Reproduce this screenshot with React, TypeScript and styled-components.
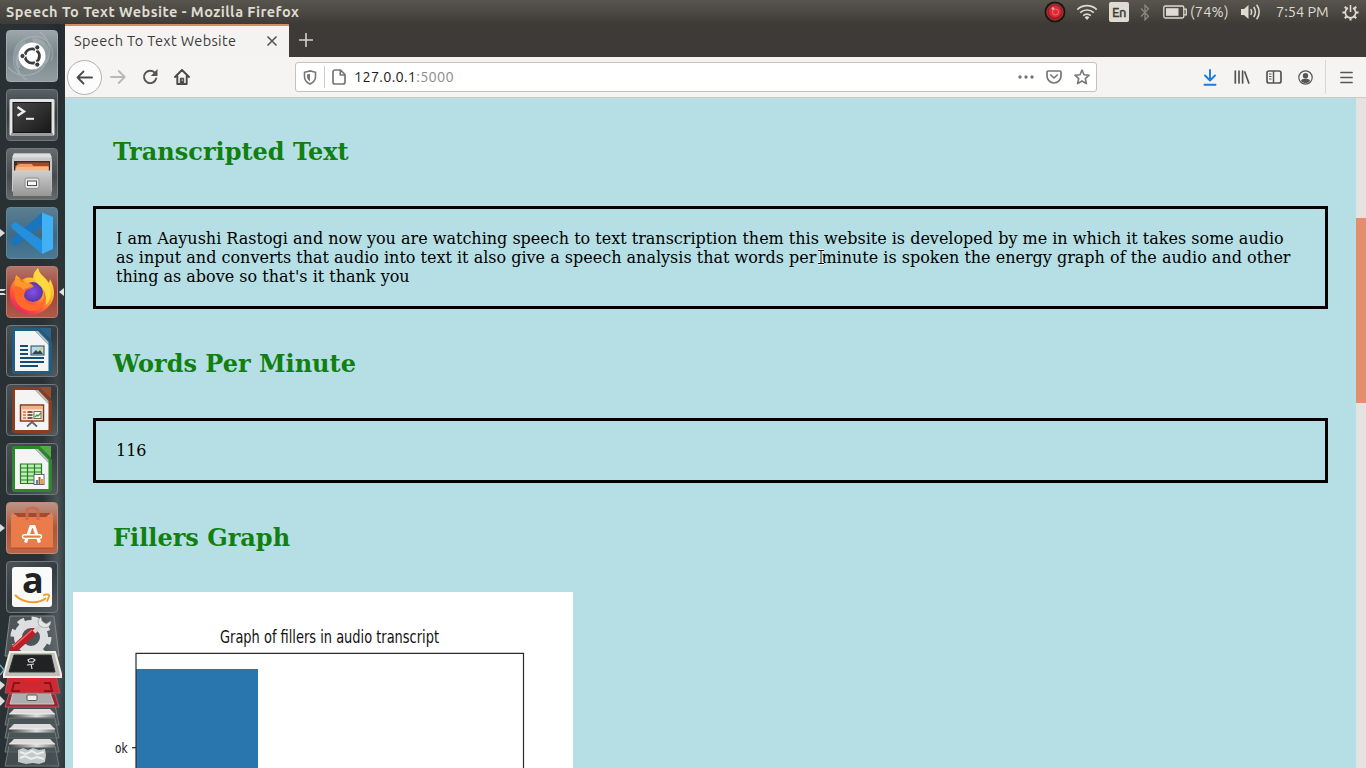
import React from "react";
import styled, { createGlobalStyle } from "styled-components";

const GlobalStyle = createGlobalStyle`
  * { box-sizing: border-box; }
  body { margin: 0; overflow: hidden; background: #b6dfe5; }
  svg { display: block; flex: none; }
`;

const uiFont = `Ubuntu, "Open Sans", "Noto Sans", sans-serif`;

const Desktop = styled.div`
  width: 1366px;
  height: 768px;
  display: flex;
  flex-direction: column;
  overflow: hidden;
  font-family: ${uiFont};
`;

const Panel = styled.header`
  height: 24px;
  flex: none;
  display: flex;
  align-items: center;
  justify-content: space-between;
  padding: 0 7px 0 6px;
  background: linear-gradient(#57554d, #4b4942 50%, #3e3b37);
  color: #dfdbd2;
`;

const WindowTitle = styled.span`
  font-size: 14.5px;
  line-height: 24px;
  font-weight: 700;
  white-space: nowrap;
  letter-spacing: 0.46px;
`;

const Indicators = styled.div`
  display: flex;
  align-items: center;
  height: 24px;
`;

const Indicator = styled.div<{ $gap?: number }>`
  display: flex;
  align-items: center;
  margin-left: ${(p) => p.$gap ?? 0}px;
`;

const PanelText = styled.span<{ $w: number; $spacing: number }>`
  width: ${(p) => p.$w}px;
  font-size: 14.5px;
  line-height: 24px;
  letter-spacing: ${(p) => p.$spacing}px;
  white-space: nowrap;
`;

const Keyboard = styled.span`
  width: 20px;
  height: 20px;
  border-radius: 2px;
  background: #dfdbd2;
  color: #3f3d38;
  font-size: 13px;
  line-height: 21px;
  font-weight: 500;
  text-align: center;
  letter-spacing: -0.5px;
  -webkit-text-stroke: 0.3px #3f3d38;
`;

const Workspace = styled.div`
  flex: 1;
  min-height: 0;
  display: flex;
`;

const Launcher = styled.aside`
  width: 65px;
  flex: none;
  display: flex;
  flex-direction: column;
  gap: 7px;
  padding-top: 6px;
  background:
    linear-gradient(90deg, #2a3135 0 66%, rgba(42, 49, 53, 0.2) 88%, rgba(42, 49, 53, 0.75) 100%),
    linear-gradient(#20292e 0, #2c3437 30%, #566164 70%, #566164 85%, #3e484c 100%);
`;

const LauncherItem = styled.div`
  display: flex;
  align-items: center;
  height: 52px;
  flex: none;
`;

const Marker = styled.span<{ $kind?: "one" | "two" }>`
  width: 6px;
  height: ${(p) => (p.$kind === "two" ? 6 : 8)}px;
  flex: none;
  border: 0 solid transparent;
  ${(p) => p.$kind === "one" && "border-width: 4px 0 4px 5px; border-left-color: #dcdcdc;"}
  ${(p) => p.$kind === "two" && "border-width: 2px 2px 2px 0; border-top-color: #dcdcdc; border-bottom-color: #dcdcdc;"}
`;

const ActiveMarker = styled.span`
  width: 0;
  margin-left: 1px;
  border: 4px solid transparent;
  border-right: 5px solid #e2e2e2;
  border-left: 0;
`;

const Tile = styled.div<{ $bg: string; $edge: string }>`
  width: 52px;
  height: 52px;
  flex: none;
  border-radius: 4px;
  border: 1px solid ${(p) => p.$edge};
  background: ${(p) => p.$bg};
  display: flex;
  align-items: center;
  justify-content: center;
`;

const Browser = styled.main`
  flex: 1;
  min-width: 0;
  display: flex;
  flex-direction: column;
`;

const TabStrip = styled.div`
  height: 33px;
  flex: none;
  display: flex;
  background: #3e3a37;
`;

const Tab = styled.div`
  width: 224px;
  height: 33px;
  display: flex;
  align-items: center;
  justify-content: space-between;
  padding: 0 11px 2px 9px;
  border-top: 2px solid #d58a6d;
  background: #f5f3f2;
  color: #3d3c3b;
  font-size: 14.5px;
  letter-spacing: 0.36px;
  white-space: nowrap;
`;

const NewTab = styled.div`
  width: 34px;
  height: 32px;
  display: flex;
  align-items: center;
  justify-content: center;
`;

const Toolbar = styled.div`
  height: 41px;
  flex: none;
  display: flex;
  align-items: center;
  padding: 0 13px 0 2px;
  background: #f5f4f3;
  border-bottom: 1px solid #cbc9c8;
`;

const BackButton = styled.div`
  width: 35px;
  height: 35px;
  flex: none;
  border: 1px solid #b3b1b0;
  border-radius: 50%;
  background: #fcfcfc;
  display: flex;
  align-items: center;
  justify-content: center;
`;

const Nav = styled.div`
  display: flex;
  align-items: center;
  gap: 16px;
  width: 193px;
  padding-left: 8px;
`;

const UrlBar = styled.div`
  width: 802px;
  height: 30px;
  flex: none;
  display: flex;
  align-items: center;
  padding: 0 6px 0 7px;
  border: 1px solid #c4c2c1;
  border-radius: 3px;
  background: #fff;
`;

const UrlDivider = styled.span`
  width: 1px;
  height: 22px;
  margin: 0 7px 0 7px;
  background: #cfcdcc;
`;

const Url = styled.span`
  flex: 1;
  padding-left: 8px;
  font-size: 14.5px;
  line-height: 28px;
  letter-spacing: 0.28px;
  color: #1c1b1b;
`;

const Port = styled.span`
  color: #8d8c8b;
`;

const UrlActions = styled.div`
  display: flex;
  align-items: center;
  gap: 12px;
`;

const Tools = styled.div`
  flex: 1;
  display: flex;
  align-items: center;
  justify-content: flex-end;
  gap: 16px;
`;

const ToolDivider = styled.span`
  width: 1px;
  height: 34px;
  margin: 0 -2px 0 -4px;
  background: #d8d6d5;
`;

const Viewport = styled.div`
  flex: 1;
  min-height: 0;
  display: flex;
`;

const Page = styled.div`
  flex: 1;
  min-width: 0;
  overflow: hidden;
  padding: 40px 8px 0;
  background: #b6dfe5;
  color: #000;
  font-family: "DejaVu Serif", serif;
`;

const Heading = styled.h2`
  margin: 0;
  padding-left: 40px;
  font-size: 24px;
  line-height: 28px;
  font-weight: 700;
  color: #108010;
`;

const ResultBox = styled.div`
  position: relative;
  margin: 40px 20px 41px;
  padding: 20px;
  border: 3px solid #000;
  font-size: 16px;
  line-height: 19px;
`;

const Line = styled.div`
  white-space: nowrap;
`;

const Caret = styled.svg`
  position: absolute;
  left: 721px;
  top: 40px;
`;

const Chart = styled.svg`
  margin-top: 40px;
  background: #fff;
`;

const ScrollTrack = styled.div`
  width: 10px;
  flex: none;
  padding-top: 120px;
  background: #e5e3e2;
`;

const ScrollThumb = styled.div`
  height: 185px;
  background: #e48e6d;
`;

const RecordIcon = () => (
  <svg width="22" height="22" viewBox="0 0 22 22">
    <circle cx="11" cy="11" r="10.5" fill="#1b1514" />
    <circle cx="11" cy="11" r="8.2" fill="#b01522" stroke="#7b5552" strokeWidth="0.8" />
    <circle cx="11" cy="10.5" r="6" fill="#d82a38" />
    <circle cx="11.5" cy="11" r="3" fill="none" stroke="#ee6d72" strokeWidth="1" />
    <circle cx="9" cy="7.5" r="1.3" fill="#f4a6a5" />
  </svg>
);

const WifiIcon = () => (
  <svg width="22" height="16" viewBox="0 0 22 16" fill="none" stroke="#dfdbd2" strokeWidth="1.7">
    <path d="M1.3 5.6C6.8.3 15.2.3 20.7 5.6M4.2 8.7c3.9-3.6 9.7-3.6 13.6 0M7.2 11.7c2.3-2 5.3-2 7.6 0" />
    <path d="M8.6 13.3a3.6 3.6 0 0 1 4.8 0L11 16z" fill="#dfdbd2" stroke="none" />
  </svg>
);

const BluetoothIcon = () => (
  <svg width="10" height="17" viewBox="0 0 10 17" fill="none" stroke="#8a877f" strokeWidth="1.3">
    <path d="M1 4.5l7.5 7.7L5 15.8V1.2l3.5 3.6L1 12.5" />
  </svg>
);

const BatteryIcon = () => (
  <svg width="24" height="14" viewBox="0 0 24 14">
    <rect x="0.8" y="1" width="20" height="12" rx="1.5" fill="none" stroke="#dfdbd2" strokeWidth="1.3" />
    <rect x="3" y="3.2" width="12.5" height="7.6" fill="#dfdbd2" />
    <path d="M21 4.2h2.3v5.6H21" fill="none" stroke="#dfdbd2" strokeWidth="1.3" />
  </svg>
);

const VolumeIcon = () => (
  <svg width="20" height="18" viewBox="0 0 20 18">
    <path d="M0 6h3l4.5-4v14L3 12H0z" fill="#dfdbd2" />
    <path d="M9.700 6.200q1.800 2.800 0 5.600M12.700 4q3.300 5 0 10M15.700 1.800q5 7.200 0 14.400" fill="none" stroke="#dfdbd2" strokeWidth="1.5" />
  </svg>
);

const SessionIcon = () => (
  <svg width="17" height="17" viewBox="0 0 17 17" fill="none" stroke="#dfdbd2">
    <path d="M6 4a5.200 5.200 0 1 0 5 0" strokeWidth="1.7" />
    <path d="M8.500 1v7" strokeWidth="1.6" />
    <path d="M.4 8.500h3M13.600 8.500h3M2.800 2.800l2 2M14.200 2.800l-2 2M2.800 14.200l2-2M14.200 14.200l-2-2M8.500 13.600v3" strokeWidth="2.1" />
  </svg>
);

const UbuntuIcon = () => (
  <svg width="50" height="50" viewBox="0 0 50 50">
    <g fill="none" stroke="#d0d7da" opacity=".3" strokeWidth="1.5">
      <path d="M13 44C2 31 5 13 20 7s31 7 24 23" />
      <path d="M20 49C8 42 7 26 15 17M33 1c11 8 17 29-5 38M1 36c8 11 27 12 37-2" />
    </g>
    <path d="M25 7c16 0 22 14 14 27L30 25zM12 38C3 28 8 14 18 10l2 12z" fill="#cbd3d6" opacity=".28" />
    <circle cx="25" cy="25" r="13.5" fill="#fff" />
    <circle cx="25.2" cy="25" r="7.2" fill="none" stroke="#393e40" strokeWidth="2.8" strokeDasharray="13.6 1.48" strokeDashoffset="6.8" />
    <g fill="#393e40" stroke="#fff" strokeWidth="1">
      <circle cx="15.500" cy="25" r="2.6" />
      <circle cx="30.300" cy="16.400" r="2.6" />
      <circle cx="30.300" cy="33.600" r="2.6" />
    </g>
  </svg>
);

const TerminalIcon = () => (
  <svg width="50" height="50" viewBox="0 0 50 50">
    <defs>
      <linearGradient id="term" x1="0" y1="0" x2="1" y2="1">
        <stop offset="0" stopColor="#484848" />
        <stop offset=".5" stopColor="#303030" />
        <stop offset="1" stopColor="#171717" />
      </linearGradient>
    </defs>
    <rect x="2.5" y="9" width="45" height="36.5" rx="1.5" fill="#e4e4e4" />
    <rect x="4" y="43" width="42" height="2" fill="#9c9c9c" />
    <rect x="6" y="12.500" width="38" height="30" fill="url(#term)" stroke="#151515" />
    <path d="M10.500 17l6.500 4.400-6.500 4.400" fill="none" stroke="#eee" strokeWidth="2.4" />
    <path d="M19 28.800h8" stroke="#eee" strokeWidth="2" />
  </svg>
);

const FilesIcon = () => (
  <svg width="50" height="50" viewBox="0 0 50 50">
    <defs>
      <linearGradient id="cab" x1="0" y1="0" x2="0" y2="1">
        <stop offset="0" stopColor="#cfcfcf" />
        <stop offset="1" stopColor="#969696" />
      </linearGradient>
    </defs>
    <path d="M7 4.500h36l2 6v32H5v-32z" fill="#c9c9c9" />
    <path d="M7 4.500h36l2 4H5z" fill="#dedede" />
    <path d="M7 12h36v10H7z" fill="#35302e" />
    <path d="M10 13.500h32v9H10z" fill="#a84823" />
    <path d="M8.500 17l4-2h12l2 2h15v7h-33z" fill="#ed9865" />
    <path d="M8.500 19.500l2-1.500h31v5h-33z" fill="#f3b98a" />
    <path d="M6 21.500h38.500V47H6z" fill="url(#cab)" />
    <rect x="18" y="29" width="14" height="10.500" rx="2" fill="#e5e5e5" stroke="#8a8a8a" />
    <rect x="20.500" y="32" width="9" height="4.500" fill="#f7f7f7" stroke="#4e4e4e" />
  </svg>
);

const CodeIcon = () => (
  <svg width="50" height="50" viewBox="0 0 50 50">
    <path d="M35 4.500L4.500 31.500v4l4 2.500L36 17z" fill="#1976bd" />
    <path d="M8.500 14L4.500 16.500v3.500L35 46l1-13z" fill="#2490dd" />
    <path d="M35 4.500L46 9v32l-11 5z" fill="#42b0f5" />
  </svg>
);

const FirefoxIcon = () => (
  <svg width="50" height="50" viewBox="0 0 50 50">
    <defs>
      <linearGradient id="fox" x1=".85" y1="0" x2=".2" y2="1">
        <stop offset="0" stopColor="#fff24b" />
        <stop offset=".4" stopColor="#ffb32d" />
        <stop offset=".7" stopColor="#ff5939" />
        <stop offset="1" stopColor="#e91a69" />
      </linearGradient>
      <radialGradient id="globe">
        <stop offset="0" stopColor="#874ee7" />
        <stop offset="1" stopColor="#5537a9" />
      </radialGradient>
    </defs>
    <path d="M31 1c1 7 7 8 11 15l1-4c6 11 5 21-1 27-10 12-28 11-36-1C0 28 3 18 8 13l1-5 6 5c4-3 7-3 11-2l1-5z" fill="url(#fox)" />
    <circle cx="26" cy="25" r="10" fill="url(#globe)" />
    <path d="M8 13c6-3 9 1 10 3 3 1 7 1 9 3-2 3-7 2-9 6-3 7 2 14 11 13 8-1 10-9 6-16 9 8 1 22-10 22C12 43 5 32 8 21z" fill="#ff6a2b" />
    <path d="M31 1c1 8 9 10 12 20 2 8-1 14-4 17 1-8-1-16-7-20-6-5-6-11-1-17z" fill="#ffd83f" />
    <path d="M8 10l8 5c4 0 8 1 10 4-3 2-7 1-9 4-3-3-6-4-9-4z" fill="#ff982b" />
  </svg>
);

const DocumentIcon = ({ colour, fold, children }: { colour: string; fold: string; children: React.ReactNode }) => (
  <svg width="50" height="50" viewBox="0 0 50 50">
    <path d="M7 2h25l13 14v29c0 2-1 3-3 3H8c-2 0-3-1-3-3V4c0-1 1-2 2-2z" fill={colour} />
    <path d="M32 2h12v12z" fill={fold} />
    <path d="M8 5h20l13.500 14v26H8z" fill="#f4f4f5" />
    <path d="M28 5l13.500 14v-3L31 5z" fill="#b9c0c3" />
    {children}
  </svg>
);

const WriterArt = () => (
  <>
    <path d="M13 20h8M13 24h8M13 28h8M13 32h24M13 36h24M13 40h18" stroke="#174d70" strokeWidth="2" />
    <rect x="24" y="20" width="13" height="9" fill="#b9dbe5" stroke="#184c68" />
    <path d="M25 28l4-4 2 2 2-2 3 4z" fill="#36434a" />
    <circle cx="34" cy="23" r="1.3" fill="#f5ca3d" />
  </>
);

const ImpressArt = () => (
  <>
    <path d="M25 35v3M20 41.500l5-4.500 5 4.500" fill="none" stroke="#666" strokeWidth="1.7" />
    <rect x="13.500" y="20" width="23" height="16" fill="#ffe7d5" stroke="#8c3818" strokeWidth="1.5" />
    <path d="M14.500 21h21v3.500h-21z" fill="#f0b28e" />
    <path d="M16 27h3M16 30h3M16 33h3" stroke="#dc6d3d" strokeWidth="1.6" />
    <path d="M20.500 27h5M20.500 30h5M20.500 33h5" stroke="#5c2b1d" strokeWidth="1.6" />
    <rect x="27" y="26.500" width="7" height="7" fill="#fff" stroke="#54754e" />
    <path d="M28 32l2-2 1 1 3-3" fill="none" stroke="#48973f" strokeWidth="1.3" />
  </>
);

const CalcArt = () => (
  <>
    <rect x="13" y="20" width="22" height="19" fill="#bff0b3" />
    <path d="M13.500 20v19.500h21V20zM13.500 24h21M13.500 28h21M13.500 32h21M13.500 36h21M20.500 20v19.500M27.500 20v19.500" stroke="#247b27" strokeWidth="1.2" fill="none" />
    <rect x="27" y="30.500" width="10" height="10" fill="#fff" stroke="#667" />
    <path d="M29 36h2v4h-2z" fill="#4889bd" />
    <path d="M31.500 33h2v7h-2z" fill="#c74c27" />
    <path d="M34 35h2v5h-2z" fill="#e1a52b" />
  </>
);

const SoftwareIcon = () => (
  <svg width="50" height="50" viewBox="0 0 50 50">
    <path d="M5 10h40l1 5H4z" fill="#a8492b" />
    <path d="M4 14h42v32H4z" fill="#ea7c4b" />
    <path d="M5 9l6 5H4zM45 9l-6 5h7z" fill="#dc8562" />
    <path d="M20 17V8c0-4 11-4 11 0v9" fill="none" stroke="#cf6a52" strokeWidth="3" />
    <path d="M18.500 39.500L24 23.500h3l5.500 16" fill="none" stroke="#fff" strokeWidth="3.200" />
    <rect x="15.500" y="31.800" width="19" height="3.600" rx="1.800" fill="#ea7c4b" stroke="#fff" strokeWidth="1.400" />
    <path d="M4 44.500h42V46H4z" fill="#bd532d" />
  </svg>
);

const AmazonSvg = styled.svg`
  overflow: visible;
`;

const AmazonLetter = styled.text`
  font: 700 36px "Open Sans", sans-serif;
`;

const AmazonIcon = () => (
  <AmazonSvg width="50" height="50" viewBox="0 0 50 50">
    <rect x="5" y="5" width="40" height="40" rx="3" fill="#fafafa" />
    <AmazonLetter x="15" y="30.500" fill="#202224">a</AmazonLetter>
    <path d="M8 33c9 9 24 9 31 3" fill="none" stroke="#f49b21" strokeWidth="2" />
    <path d="M36 33.500c4-2 7-1 6 1l-2 5" fill="none" stroke="#f49b21" strokeWidth="1.8" />
  </AmazonSvg>
);

const DockStack = styled.svg`
  margin-top: -7px;
`;

const FoldedDock = () => (
  <DockStack width="65" height="155" viewBox="0 613 65 155">
    <defs>
      <linearGradient id="slab" x1="0" y1="0" x2="1" y2="0">
        <stop offset="0" stopColor="#444" />
        <stop offset=".6" stopColor="#ddd" />
        <stop offset="1" stopColor="#777" />
      </linearGradient>
    </defs>
    <path d="M10 616h44l5 40H5z" fill="#6f797c" fillOpacity=".5" stroke="#80888b" />
    <circle cx="31" cy="637" r="13" fill="none" stroke="#dcdedf" strokeWidth="8" />
    <circle cx="31" cy="637" r="18" fill="none" stroke="#dcdedf" strokeWidth="5" strokeDasharray="7.07 7.07" />
    <path d="M14 649l19-17" stroke="#b81f27" strokeWidth="7.500" strokeLinecap="round" />
    <path d="M13 647l19-17" stroke="#ee6a6a" strokeWidth="1.500" />
    <path d="M34 632l9-9" stroke="#d2d5d8" strokeWidth="4" />
    <path d="M41 617c-4 3-4 8 1 10s9-1 9-6l-5 3-4-3z" fill="#e3e5e7" stroke="#8c9294" strokeWidth=".6" />

    {[705, 718, 732, 746].map((y) => (
      <path key={y} d={`M9 ${y}h46l4 20H5z`} fill="#4c575a" fillOpacity=".75" stroke="#6f7a7d" strokeWidth="1" />
    ))}
    {[709, 724, 739].map((y) => (
      <g key={y}>
        <path d={`M14 ${y}h36l5 5H9z`} fill="#dcdcdc" />
        <path d={`M9 ${y + 5}h46v3.500H9z`} fill="url(#slab)" />
        <path d={`M9 ${y + 5}h46`} stroke="#f5f5f5" strokeWidth=".8" />
      </g>
    ))}
    <path d="M18 750l5-2 5 2 5-2 6 2 6-1 1 6-1 7-6 2-6-1-7 1-8-2z" fill="#c3c8c8" />
    <path d="M20 752l6 2 6-3 5 3 7-2M20 758l5-2 6 3 6-2 7 2" fill="none" stroke="#eceeed" strokeWidth="2" />

    <path d="M9 694h46l4 13H5z" fill="#9c2435" stroke="#b25a61" />
    <path d="M13 693h37l4 11H10z" fill="#adadad" stroke="#c9c9c9" />
    <rect x="27" y="695" width="10" height="5.500" rx="1" fill="#eee" stroke="#555" />
    <path d="M8 677h48l4 16H5z" fill="#cc2a30" stroke="#a95256" />
    <path d="M20 683h-6l-2 8h8M44 683h6l2 8h-8" fill="none" stroke="#8b1218" strokeWidth="2" />
    <path d="M23 678h18c-2 5-16 5-18 0z" fill="#ef1f24" />

    <path d="M10 652h45l6 22v3H4v-3z" fill="#bfbfba" stroke="#eeeee2" strokeWidth="2" />
    <path d="M14 655h37l4 17H9z" fill="#202223" stroke="#333" />
    <path d="M28 660q4-3 7 0l-2 2h-4zM27 665l7-1M31 664l1 5" fill="none" stroke="#e5e5e5" strokeWidth="1.2" />
    <path d="M0 665l4 5-4 5" fill="none" stroke="#72b7ce" strokeWidth="1.400" />
    <path d="M0 681l5 4-5 5zM0 696l5 5-5 5z" fill="#ddd" />
  </DockStack>
);

const BackIcon = () => (
  <svg width="17" height="15" viewBox="0 0 17 15" fill="none" stroke="#4b4a49" strokeWidth="1.8" strokeLinecap="round" strokeLinejoin="round">
    <path d="M16 7.500H1.500M7.500 1.500l-6 6 6 6" />
  </svg>
);

const ForwardIcon = () => (
  <svg width="16" height="14" viewBox="0 0 16 14" fill="none" stroke="#b9b8b7" strokeWidth="1.800" strokeLinecap="round" strokeLinejoin="round">
    <path d="M1 7h13.500M8.700 1l6 6-6 6" />
  </svg>
);

const ReloadIcon = () => (
  <svg width="16" height="16" viewBox="0 0 16 16" fill="none" stroke="#555453" strokeWidth="1.9">
    <path d="M13.200 4.200A6.200 6.200 0 1 0 14.200 9.500" strokeLinecap="round" />
    <path d="M15.500 0v7H8.800z" fill="#555453" stroke="none" />
  </svg>
);

const HomeIcon = () => (
  <svg width="16" height="16" viewBox="0 0 16 16" fill="none" stroke="#4b4a49" strokeWidth="1.900">
    <path d="M1 8l7-7 7 7M3.300 7v8h9.400V7" strokeLinecap="round" strokeLinejoin="round" />
    <path d="M6.300 15V9.200h3.400V15" fill="#4b4a49" strokeWidth="1" />
    <path d="M7.800 10.500h1v1.300h-1z" fill="#fff" stroke="none" />
  </svg>
);

const ShieldIcon = () => (
  <svg width="14" height="15" viewBox="0 0 14 15">
    <path d="M7 .9l5.500 1.400v4.400c0 3.400-2.400 5.800-5.500 7.300-3.100-1.500-5.500-3.900-5.500-7.300V2.300z" fill="none" stroke="#777675" strokeWidth="1.600" />
    <path d="M7 3.700L4 4.500v2.300c0 2 1.200 3.400 3 4.400z" fill="#777675" />
  </svg>
);

const PageIcon = () => (
  <svg width="14" height="16" viewBox="0 0 14 16" fill="none" stroke="#777675" strokeWidth="1.700" strokeLinejoin="round">
    <path d="M3 1h5.500L13 5.500V13a2 2 0 0 1-2 2H3a2 2 0 0 1-2-2V3a2 2 0 0 1 2-2zM8.300 1v5H13" />
  </svg>
);

const DotsIcon = () => (
  <svg width="16" height="4" viewBox="0 0 16 4" fill="#777675">
    <circle cx="2" cy="2" r="1.700" />
    <circle cx="8" cy="2" r="1.700" />
    <circle cx="14" cy="2" r="1.700" />
  </svg>
);

const PocketIcon = () => (
  <svg width="16" height="14" viewBox="0 0 16 14" fill="none" stroke="#777675" strokeWidth="1.700" strokeLinecap="round" strokeLinejoin="round">
    <path d="M2.300 1h11.400c.8 0 1.300.5 1.300 1.300V6a7 7 0 0 1-14 0V2.300C1 1.500 1.500 1 2.300 1z" />
    <path d="M4.800 5L8 8l3.200-3" />
  </svg>
);

const StarIcon = () => (
  <svg width="16" height="16" viewBox="0 0 16 16" fill="none" stroke="#777675" strokeWidth="1.600" strokeLinejoin="round">
    <path d="M8 1l2 4.700 5.100.5-3.800 3.400 1.100 5L8 12l-4.400 2.600 1.100-5L.9 6.200 6 5.700z" />
  </svg>
);

const DownloadSvg = styled.svg`
  margin-right: 1px;
`;

const DownloadIcon = () => (
  <DownloadSvg width="14" height="17" viewBox="0 0 14 17" fill="none" stroke="#1b7bdc" strokeWidth="1.900" strokeLinecap="round" strokeLinejoin="round">
    <path d="M7 1v10M2 6.500l5 5 5-5M1.500 15.700h11" />
  </DownloadSvg>
);

const LibraryIcon = () => (
  <svg width="16" height="14" viewBox="0 0 16 14" stroke="#565554" strokeWidth="1.700" strokeLinecap="round">
    <path d="M1.300 1v12M5 1v12M8.600 1v12M10.800 2l4 11" fill="none" />
  </svg>
);

const SidebarIcon = () => (
  <svg width="16" height="14" viewBox="0 0 16 14" fill="none" stroke="#565554" strokeWidth="1.700">
    <rect x="1" y="1" width="14" height="12" rx="2" />
    <path d="M7.500 1v12" strokeWidth="1.500" />
    <path d="M3 4h2.500M3 6.500h2.500M3 9h2.500" strokeWidth="1" />
  </svg>
);

const AccountIcon = () => (
  <svg width="15" height="15" viewBox="0 0 15 15">
    <circle cx="7.500" cy="7.500" r="6.700" fill="none" stroke="#565554" strokeWidth="1.200" />
    <circle cx="7.500" cy="5.700" r="2.700" fill="#565554" />
    <path d="M3 11c.5-2 2-2.300 4.500-2.300S11.500 9 12 11c-2.300 2.700-6.700 2.700-9 0z" fill="#565554" />
  </svg>
);

const MenuIcon = () => (
  <svg width="13" height="13" viewBox="0 0 13 13" stroke="#565554" strokeWidth="1.700" strokeLinecap="round">
    <path d="M1 1.500h11M1 6.500h11M1 11.500h11" />
  </svg>
);

const ChartText = styled.text`
  font-family: "DejaVu Sans", sans-serif;
  fill: #111;
`;

const FillersChart = () => (
  <Chart width="500" height="176" viewBox="0 0 500 176">
    <rect x="63" y="77" width="122" height="99" fill="#2976af" />
    <path d="M63 176V61.300H450.500V176" fill="none" stroke="#2b2b2b" strokeWidth="1.200" />
    <path d="M59 155.700h4" stroke="#222" strokeWidth="1.200" />
    <ChartText x="147" y="51" fontSize="17" textLength="219" lengthAdjust="spacingAndGlyphs">
      Graph of fillers in audio transcript
    </ChartText>
    <ChartText x="42" y="161" fontSize="14" textLength="12.500" lengthAdjust="spacingAndGlyphs">
      ok
    </ChartText>
  </Chart>
);

const glass = "linear-gradient(145deg, #4c5356, #343b3e 48%, #535a5d)";

const launcherItems: { bg: string; edge: string; icon: React.ReactNode; marker?: "one" | "two"; active?: boolean }[] = [
  { bg: "linear-gradient(#9ca6aa, #78858b 45%, #929da1)", edge: "#a2abae", icon: <UbuntuIcon /> },
  { bg: "linear-gradient(#596064, #343b3e 50%, #565c5f)", edge: "#6f777a", icon: <TerminalIcon /> },
  { bg: "linear-gradient(#666b6e, #444a4d 55%, #64696c)", edge: "#74797b", icon: <FilesIcon /> },
  { bg: "linear-gradient(#5b7e91, #3d6a86 55%, #4b7893)", edge: "#61869a", icon: <CodeIcon />, marker: "one" },
  { bg: "linear-gradient(#b47568, #9b4237 50%, #b15a4a)", edge: "#bb7e70", icon: <FirefoxIcon />, marker: "two", active: true },
  { bg: glass, edge: "#71797c", icon: <DocumentIcon colour="#205d83" fold="#2b6488"><WriterArt /></DocumentIcon> },
  { bg: glass, edge: "#71797c", icon: <DocumentIcon colour="#883e20" fold="#9a4d2a"><ImpressArt /></DocumentIcon> },
  { bg: glass, edge: "#71797c", icon: <DocumentIcon colour="#2d882c" fold="#4fad45"><CalcArt /></DocumentIcon> },
  { bg: "linear-gradient(#bd9486, #a95838 50%, #b9674b)", edge: "#c28b77", icon: <SoftwareIcon />, marker: "one" },
  { bg: glass, edge: "#71797c", icon: <AmazonIcon /> },
];

export default function App() {
  return (
    <Desktop>
      <GlobalStyle />
      <Panel>
        <WindowTitle>Speech To Text Website - Mozilla Firefox</WindowTitle>
        <Indicators>
          <Indicator><RecordIcon /></Indicator>
          <Indicator $gap={10}><WifiIcon /></Indicator>
          <Indicator $gap={11}><Keyboard>En</Keyboard></Indicator>
          <Indicator $gap={11}><BluetoothIcon /></Indicator>
          <Indicator $gap={13}><BatteryIcon /></Indicator>
          <Indicator $gap={3}><PanelText $w={39} $spacing={0.2}>(74%)</PanelText></Indicator>
          <Indicator $gap={12}><VolumeIcon /></Indicator>
          <Indicator $gap={15}><PanelText $w={53} $spacing={0}>7:54 PM</PanelText></Indicator>
          <Indicator $gap={13}><SessionIcon /></Indicator>
        </Indicators>
      </Panel>
      <Workspace>
        <Launcher>
          {launcherItems.map((item, i) => (
            <LauncherItem key={i}>
              <Marker $kind={item.marker} />
              <Tile $bg={item.bg} $edge={item.edge}>{item.icon}</Tile>
              {item.active && <ActiveMarker />}
            </LauncherItem>
          ))}
          <FoldedDock />
        </Launcher>
        <Browser>
          <TabStrip>
            <Tab>
              Speech To Text Website
              <svg width="12" height="12" viewBox="0 0 12 12" stroke="#555" strokeWidth="1.6">
                <path d="M1.500 1.500l9 9M10.500 1.500l-9 9" />
              </svg>
            </Tab>
            <NewTab>
              <svg width="14" height="14" viewBox="0 0 14 14" stroke="#d5d2ce" strokeWidth="1.6">
                <path d="M7 0v14M0 7h14" />
              </svg>
            </NewTab>
          </TabStrip>
          <Toolbar>
            <BackButton><BackIcon /></BackButton>
            <Nav><ForwardIcon /><ReloadIcon /><HomeIcon /></Nav>
            <UrlBar>
              <ShieldIcon />
              <UrlDivider />
              <PageIcon />
              <Url>127.0.0.1<Port>:5000</Port></Url>
              <UrlActions><DotsIcon /><PocketIcon /><StarIcon /></UrlActions>
            </UrlBar>
            <Tools>
              <DownloadIcon /><LibraryIcon /><SidebarIcon /><AccountIcon /><ToolDivider /><MenuIcon />
            </Tools>
          </Toolbar>
          <Viewport>
            <Page>
              <Heading>Transcripted Text</Heading>
              <ResultBox>
                <Line>I am Aayushi Rastogi and now you are watching speech to text transcription them this website is developed by me in which it takes some audio</Line>
                <Line>as input and converts that audio into text it also give a speech analysis that words per minute is spoken the energy graph of the audio and other</Line>
                <Line>thing as above so that's it thank you</Line>
                <Caret width="8" height="16" viewBox="0 0 8 16">
                  <path d="M1 1.500h6M1 14.500h6M4 1.500v13" stroke="#fff" strokeWidth="3" />
                  <path d="M1 1.500h6M1 14.500h6M4 1.500v13" stroke="#000" strokeWidth="1" />
                </Caret>
              </ResultBox>
              <Heading>Words Per Minute</Heading>
              <ResultBox>
                <Line>116</Line>
              </ResultBox>
              <Heading>Fillers Graph</Heading>
              <FillersChart />
            </Page>
            <ScrollTrack><ScrollThumb /></ScrollTrack>
          </Viewport>
        </Browser>
      </Workspace>
    </Desktop>
  );
}
